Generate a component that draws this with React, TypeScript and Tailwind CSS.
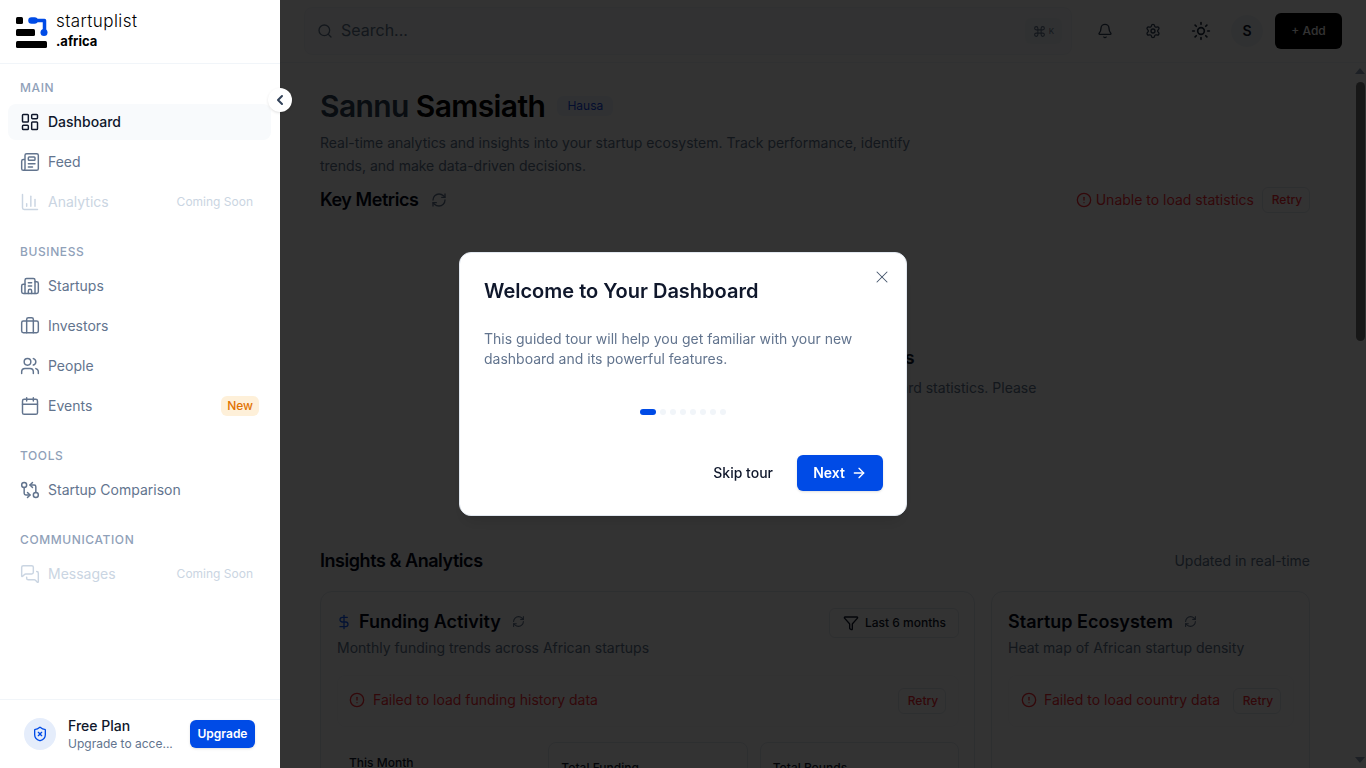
import {
  ArrowRight,
  Bell,
  Briefcase,
  Building2,
  Calendar,
  ChartColumn,
  ChevronLeft,
  CircleAlert,
  Command,
  DollarSign,
  Funnel,
  GitCompareArrows,
  LayoutDashboard,
  MessagesSquare,
  Newspaper,
  RefreshCw,
  Search,
  Settings,
  ShieldX,
  Sun,
  Users,
  X,
} from "lucide-react";
import React from "react";

const Logo = () => (
  <svg width="32" height="32" viewBox="0 0 32 32" fill="none">
    <rect x="0" y="1" width="7" height="7" rx="1.500" fill="#000" />
    <rect x="0" y="13" width="19" height="7" rx="1.500" fill="#000" />
    <rect x="0" y="25" width="31" height="7" rx="1.500" fill="#000" />
    <path d="M15 4.500h13.500V16" stroke="#004be6" strokeWidth="3.500" strokeLinecap="round" strokeLinejoin="round" />
    <path d="M15.500 4.500h3" stroke="#004be6" strokeWidth="6.500" strokeLinecap="round" />
    <circle cx="28" cy="16.500" r="3.500" fill="#004be6" />
  </svg>
);

type Item = {
  label: string;
  icon: React.ReactNode;
  active?: boolean;
  soon?: boolean;
  isNew?: boolean;
};

const mainNav: Item[] = [
  { label: "Dashboard", icon: <LayoutDashboard size={20} strokeWidth={1.75} />, active: true },
  { label: "Feed", icon: <Newspaper size={20} strokeWidth={1.75} /> },
  { label: "Analytics", icon: <ChartColumn size={20} strokeWidth={1.75} />, soon: true },
];

const businessNav: Item[] = [
  { label: "Startups", icon: <Building2 size={20} strokeWidth={1.75} /> },
  { label: "Investors", icon: <Briefcase size={20} strokeWidth={1.75} /> },
  { label: "People", icon: <Users size={20} strokeWidth={1.75} /> },
  { label: "Events", icon: <Calendar size={20} strokeWidth={1.75} />, isNew: true },
];

const NavItem = ({ item }: { item: Item }) => (
  <div
    className={
      item.active
        ? "flex h-9 items-center gap-2 rounded-lg bg-slate-50 px-3 text-sm font-medium text-slate-900"
        : item.soon
        ? "flex h-9 items-center gap-2 rounded-lg px-3 text-sm text-slate-300"
        : "flex h-9 items-center gap-2 rounded-lg px-3 text-sm text-slate-500"
    }
  >
    <span className="shrink-0">{item.icon}</span>
    <span className="flex-1">{item.label}</span>
    {item.soon && <span className="pr-[6px] text-xs text-slate-300">Coming Soon</span>}
    {item.isNew && (
      <span className="rounded-md bg-[#fef0d9] px-[6px] py-[2px] text-xs font-medium text-amber-600">New</span>
    )}
  </div>
);

const Section = ({ title, items }: { title: string; items: Item[] }) => (
  <div className="mb-6">
    <div className="mb-2 px-3 text-xs leading-4 font-medium tracking-wider text-slate-400">{title}</div>
    <div className="flex flex-col gap-1">
      {items.map((i) => (
        <NavItem key={i.label} item={i} />
      ))}
    </div>
  </div>
);

const Sidebar = () => (
  <aside className="relative z-50 flex h-full w-[280px] shrink-0 flex-col bg-white">
    <div className="flex h-16 shrink-0 items-start gap-2 border-b border-slate-100 pl-4">
      <div className="mt-4">
        <Logo />
      </div>
      <div className="mt-[10px] flex flex-col gap-px">
        <span className="text-[17px] leading-[22px] font-light tracking-wide text-black">startuplist</span>
        <span className="text-[13px] leading-4 font-bold text-black">.africa</span>
      </div>
    </div>
    <button className="absolute top-[88px] left-[268px] flex h-6 w-6 items-center justify-center rounded-full bg-white shadow">
      <ChevronLeft size={16} strokeWidth={3} className="text-slate-700" />
    </button>
    <nav className="flex-1 pt-4 pr-[9px] pl-2">
      <Section title="MAIN" items={mainNav} />
      <Section title="BUSINESS" items={businessNav} />
      <Section
        title="TOOLS"
        items={[{ label: "Startup Comparison", icon: <GitCompareArrows size={20} strokeWidth={1.75} /> }]}
      />
      <Section
        title="COMMUNICATION"
        items={[{ label: "Messages", icon: <MessagesSquare size={20} strokeWidth={1.75} />, soon: true }]}
      />
    </nav>
    <div className="flex h-[69px] shrink-0 items-center border-t border-slate-100 pr-[25px] pl-6">
      <div className="flex h-8 w-8 items-center justify-center rounded-full bg-[#e5edfb]">
        <ShieldX size={16} className="text-[#004be6]" />
      </div>
      <div className="ml-3 flex-1">
        <div className="text-sm leading-[18px] font-medium text-slate-900">Free Plan</div>
        <div className="mt-px text-xs leading-4 text-slate-500">Upgrade to acce...</div>
      </div>
      <button className="h-7 w-[65px] rounded-md bg-[#004be6] text-xs font-semibold text-white shadow-sm">
        Upgrade
      </button>
    </div>
  </aside>
);

const Retry = () => (
  <button className="h-[26px] w-12 rounded-md border border-slate-200 bg-white pl-[2px] text-xs font-medium text-red-500">
    Retry
  </button>
);

const Topbar = () => (
  <header className="flex h-[63px] shrink-0 items-center border-b border-slate-100 bg-white pr-6 pl-6">
    <div className="flex h-12 flex-1 items-center rounded-lg border border-slate-100 bg-slate-50 pr-[9px] pl-3">
      <Search size={16} className="text-slate-500" />
      <span className="ml-2 flex-1 pb-[2px] text-base text-slate-500">Search...</span>
      <span className="flex h-[26px] items-center gap-[3px] rounded-md bg-slate-100 px-[8px] text-[8px] text-slate-500">
        <Command size={13} />K
      </span>
    </div>
    <button className="ml-[13px] flex h-10 w-10 items-center justify-center text-slate-700">
      <Bell size={16} />
    </button>
    <button className="ml-2 flex h-10 w-10 items-center justify-center text-slate-700">
      <Settings size={16} />
    </button>
    <button className="ml-2 flex h-10 w-10 items-center justify-center text-slate-800">
      <Sun size={20} />
    </button>
    <div className="ml-[10px] flex h-8 w-8 items-center justify-center rounded-full bg-slate-100 text-sm font-semibold text-slate-900">
      S
    </div>
    <button className="ml-3 h-9 w-[67px] rounded-md bg-black text-xs font-medium text-white">+ Add</button>
  </header>
);

const Content = () => (
  <div className="flex-1 overflow-hidden bg-white pt-[23px] pr-11 pl-10">
    <div className="flex h-10 items-center gap-3">
      <h1 className="text-3xl font-semibold tracking-[-0.02em] text-slate-700">
        Sannu <span className="text-black">Samsiath</span>
      </h1>
      <span className="w-14 rounded-md bg-blue-50 py-[2px] text-center text-xs text-blue-700">Hausa</span>
    </div>
    <p className="mt-[6px] max-w-[600px] text-sm leading-relaxed text-slate-500">
      Real-time analytics and insights into your startup ecosystem. Track performance, identify trends, and make
      data-driven decisions.
    </p>
    <div className="mt-[8px] flex h-7 items-center justify-between">
      <div className="flex items-center gap-[13px]">
        <h2 className="text-lg font-semibold tracking-tight text-slate-950">Key Metrics</h2>
        <RefreshCw size={16} className="text-slate-500" />
      </div>
      <div className="flex items-center">
        <CircleAlert size={16} className="text-red-500" />
        <span className="mr-2 ml-1 text-sm text-red-500">Unable to load statistics</span>
        <Retry />
      </div>
    </div>
    <div className="flex h-[333px] flex-col items-center pt-[130px] text-center">
      <h3 className="text-lg font-semibold text-slate-900">Failed to load statistics</h3>
      <p className="mt-[6px] max-w-md text-sm leading-5 text-slate-500">
        We encountered an issue loading your dashboard statistics. Please try again.
      </p>
    </div>
    <div className="flex h-7 items-center justify-between">
      <h2 className="text-lg font-semibold tracking-tight text-slate-950">Insights &amp; Analytics</h2>
      <span className="text-sm text-slate-500">Updated in real-time</span>
    </div>
    <div className="mt-4 flex gap-4">
      <div className="h-[300px] w-[655px] shrink-0 rounded-xl border border-slate-200 bg-white py-4 pr-[15px] pl-4">
        <div className="flex items-start justify-between">
          <div>
            <div className="flex h-7 items-center">
              <DollarSign size={16} className="-ml-px text-blue-600" />
              <h3 className="ml-[7px] text-lg font-semibold text-slate-950">Funding Activity</h3>
              <RefreshCw size={13} className="ml-[11px] text-slate-500" />
            </div>
            <p className="mt-[2px] text-sm leading-5 text-slate-500">Monthly funding trends across African startups</p>
          </div>
          <button className="flex h-[30px] items-center gap-[6px] rounded-md border border-slate-200 pr-3 pl-[13px] text-xs font-medium text-slate-900">
            <Funnel size={16} />
            Last 6 months
          </button>
        </div>
        <div className="mt-[17px] flex h-[52px] items-center justify-between rounded-lg border border-slate-100/60 pr-3 pl-[11px]">
          <div className="flex items-center gap-2 pb-[2px]">
            <CircleAlert size={16} className="text-red-500" />
            <span className="text-sm text-red-500">Failed to load funding history data</span>
          </div>
          <Retry />
        </div>
        <div className="mt-[15px] grid grid-cols-3 gap-3">
          <div className="pt-[13px] pl-3 text-xs font-medium text-slate-900">This Month</div>
          <div className="h-24 rounded-lg border border-slate-200 px-3 pt-[17px] text-xs font-medium text-slate-900">
            Total Funding
          </div>
          <div className="h-24 rounded-lg border border-slate-200 px-3 pt-[17px] text-xs font-medium text-slate-900">
            Total Rounds
          </div>
        </div>
      </div>
      <div className="h-[300px] flex-1 rounded-xl border border-slate-200 bg-white py-4 pr-[15px] pl-4">
        <div className="flex h-7 items-center">
          <h3 className="text-lg font-semibold text-slate-950">Startup Ecosystem</h3>
          <RefreshCw size={13} className="ml-[11px] text-slate-500" />
        </div>
        <p className="mt-[2px] text-sm leading-5 text-slate-500">Heat map of African startup density</p>
        <div className="mt-[17px] flex h-[52px] items-center justify-between rounded-lg border border-slate-100/60 px-3">
          <div className="flex items-center gap-[7px] pb-[2px]">
            <CircleAlert size={16} className="text-red-500" />
            <span className="text-sm text-red-500">Failed to load country data</span>
          </div>
          <Retry />
        </div>
      </div>
    </div>
  </div>
);

const FakeScrollbar = () => (
  <div className="flex w-3 shrink-0 flex-col items-center bg-white pt-[5px]">
    <div className="h-0 w-0 border-r-[5px] border-b-[6px] border-l-[5px] border-r-transparent border-b-slate-400 border-l-transparent" />
    <div className="mt-2 h-[259px] w-[9px] rounded-full bg-neutral-500" />
    <div className="mt-auto mb-[5px] h-0 w-0 border-t-[6px] border-r-[5px] border-l-[5px] border-t-slate-400 border-r-transparent border-l-transparent" />
  </div>
);

const TourModal = () => (
  <div className="fixed inset-0 z-40 flex items-center justify-center">
    <div className="relative w-[448px] rounded-xl border border-slate-200 bg-white py-6 pr-[23px] pl-6 shadow-lg">
      <button className="absolute top-[14px] right-[14px] text-slate-600">
        <X size={20} strokeWidth={1.25} />
      </button>
      <h2 className="text-xl leading-7 font-semibold text-slate-900">Welcome to Your Dashboard</h2>
      <p className="mt-6 text-sm leading-5 text-slate-500">
        This guided tour will help you get familiar with your new dashboard and its powerful features.
      </p>
      <div className="mt-10 mr-px flex items-center justify-center gap-1">
        <div className="h-[6px] w-4 rounded-full bg-[#004be6]" />
        {[1, 2, 3, 4, 5, 6, 7].map((d) => (
          <div key={d} className="h-[6px] w-[6px] rounded-full bg-slate-100" />
        ))}
      </div>
      <div className="mt-10 flex items-center justify-end gap-6">
        <button className="text-sm font-medium text-slate-900">Skip tour</button>
        <button className="flex h-9 w-[86px] items-center justify-center gap-[6px] rounded-md bg-[#004be6] text-sm font-semibold text-white shadow-sm">
          Next
          <ArrowRight size={16} />
        </button>
      </div>
    </div>
  </div>
);

export default function App() {
  return (
    <div className="flex h-screen w-full overflow-hidden bg-white font-['Inter',sans-serif]">
      <Sidebar />
      <div className="flex min-w-0 flex-1 flex-col">
        <Topbar />
        <div className="flex min-h-0 flex-1">
          <Content />
          <FakeScrollbar />
        </div>
      </div>
      <div className="fixed inset-0 z-30 bg-black/80" />
      <TourModal />
    </div>
  );
}
